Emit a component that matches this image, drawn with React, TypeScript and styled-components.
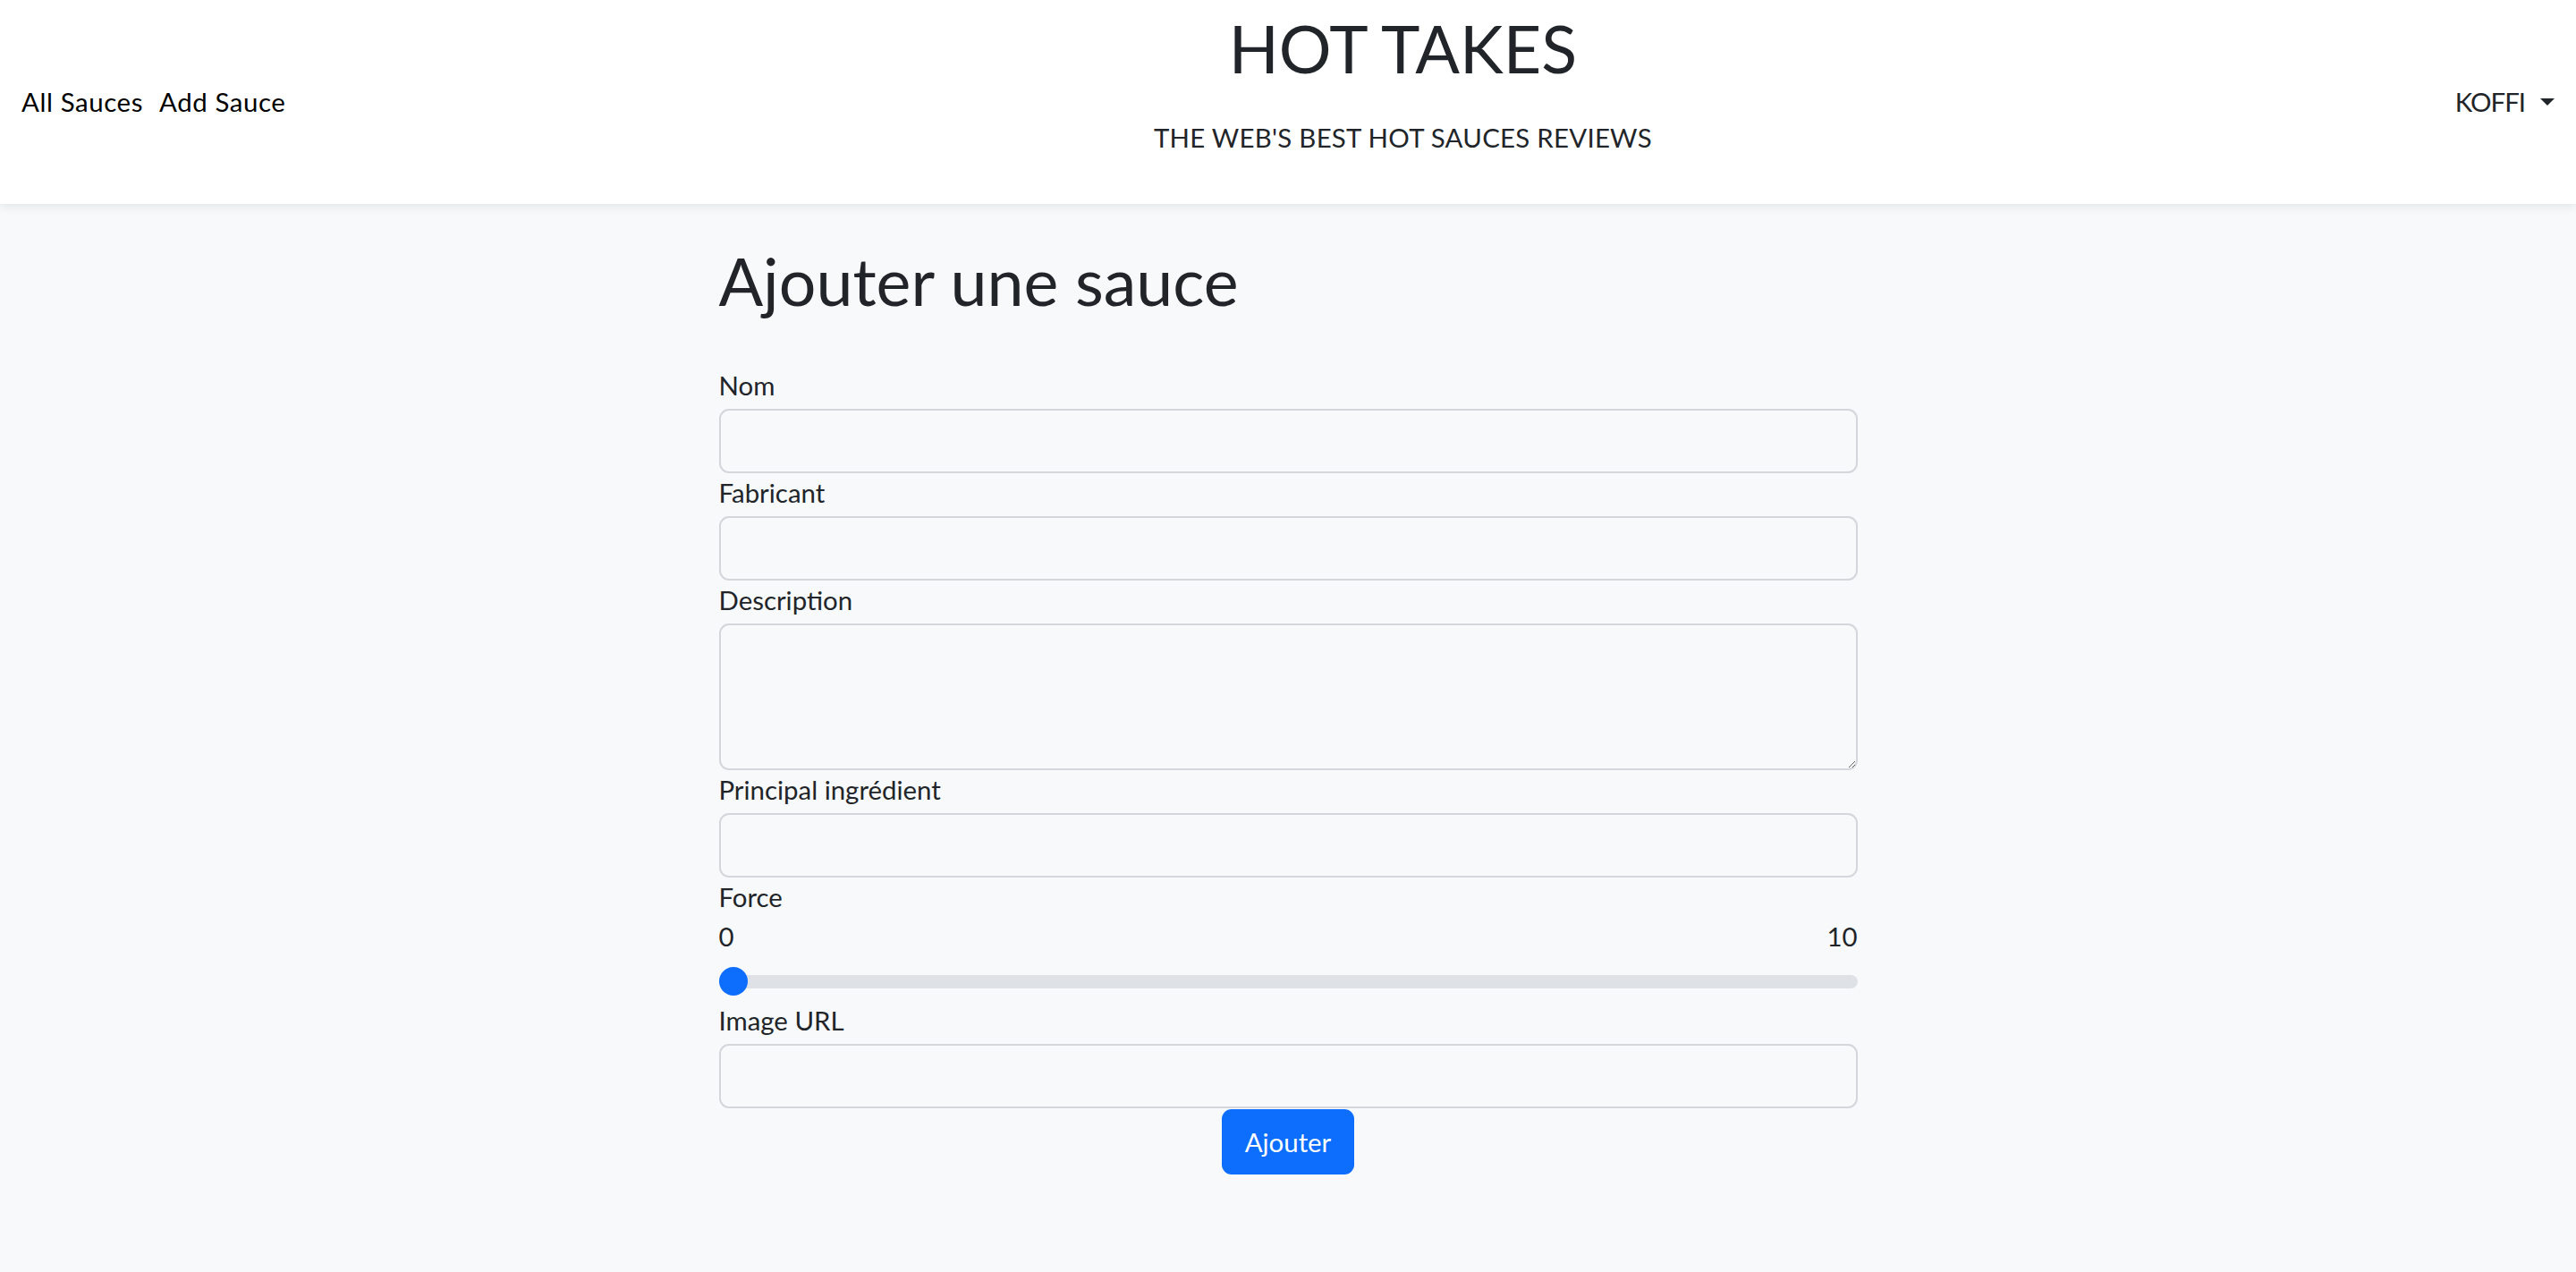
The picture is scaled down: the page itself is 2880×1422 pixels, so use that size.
import React from "react";
import styled, { createGlobalStyle } from "styled-components";

const GlobalStyle = createGlobalStyle`
  html, body {
    margin: 0;
    padding: 0;
    background: #f8f9fa;
    color: #212529;
    font-family: Lato, "Noto Sans", sans-serif;
  }
  * { box-sizing: border-box; }
`;

const Header = styled.header`
  height: 228px;
  background: #ffffff;
  box-shadow: 0 4px 9px rgba(0, 0, 0, 0.075);
  display: flex;
  align-items: center;
  padding: 0 24px;
  position: relative;
`;

const Nav = styled.nav`
  display: flex;
  flex-shrink: 0;
  gap: 18px;
  width: 300px;
  white-space: nowrap;
`;

const NavLink = styled.a`
  font-size: 29.4px;
  line-height: 44px;
  letter-spacing: 0.6px;
  color: #000;
  text-decoration: none;
`;

const Brand = styled.div`
  flex: 1;
  align-self: flex-start;
  padding-top: 10px;
  padding-left: 68px;
  text-align: center;
`;

const BrandTitle = styled.h1`
  margin: 0;
  font-size: 73.5px;
  line-height: 88px;
  font-weight: 400;
  color: #212529;
`;

const BrandTagline = styled.p`
  margin: 34px 0 0;
  font-size: 29.4px;
  line-height: 44px;
  letter-spacing: 0.27px;
  color: #212529;
`;

const UserMenu = styled.button`
  display: flex;
  flex-shrink: 0;
  align-items: center;
  gap: 17px;
  background: none;
  border: none;
  padding: 0;
  font-family: inherit;
  font-size: 29.4px;
  line-height: 44px;
  letter-spacing: -1px;
  white-space: nowrap;
  color: #212529;
`;

const Caret = styled.span`
  width: 0;
  height: 0;
  border-left: 8.5px solid transparent;
  border-right: 8.5px solid transparent;
  border-top: 8.5px solid #212529;
`;

const Main = styled.main`
  width: 1273px;
  margin: 0 auto;
  padding-top: 41.5px;
  padding-bottom: 100px;
`;

const PageTitle = styled.h1`
  margin: 0 0 51.5px;
  font-size: 73.5px;
  line-height: 88px;
  font-weight: 400;
`;

const Form = styled.form`
  display: flex;
  flex-direction: column;
`;

const Label = styled.label<{ $gap?: number }>`
  display: block;
  font-size: 29.4px;
  line-height: 44px;
  margin-bottom: ${(p) => (p.$gap ?? 4)}px;
`;

const fieldStyles = `
  display: block;
  width: 100%;
  background: #f8f9fb;
  border: 2px solid #d3d6db;
  border-radius: 11px;
  font-family: inherit;
  font-size: 29.4px;
  padding: 12px 22px;
  color: #212529;
  outline: none;
`;

const Input = styled.input`
  ${fieldStyles}
  height: 72px;
`;

const TextArea = styled.textarea`
  ${fieldStyles}
  height: 164px;
  resize: vertical;
`;

const RangeScale = styled.div`
  display: flex;
  justify-content: space-between;
  font-size: 29.4px;
  line-height: 44px;
`;

const Range = styled.input`
  -webkit-appearance: none;
  appearance: none;
  display: block;
  width: 100%;
  height: 32px;
  margin: 12px 0 6px;
  background: transparent;
  padding: 0;

  &::-webkit-slider-runnable-track {
    height: 15px;
    background: #dee2e6;
    border-radius: 8px;
  }
  &::-webkit-slider-thumb {
    -webkit-appearance: none;
    appearance: none;
    width: 32px;
    height: 32px;
    margin-top: -8.5px;
    border-radius: 50%;
    background: #0d6efd;
    border: none;
  }
`;

const SubmitButton = styled.button`
  align-self: center;
  margin-top: 1px;
  height: 73px;
  padding: 0 25.5px;
  background: #0d6efd;
  color: #ffffff;
  border: none;
  border-radius: 11px;
  font-family: inherit;
  font-size: 29.4px;
`;

export default function App() {
  return (
    <>
      <GlobalStyle />
      <Header>
        <Nav>
          <NavLink href="#">All Sauces</NavLink>
          <NavLink href="#">Add Sauce</NavLink>
        </Nav>
        <Brand>
          <BrandTitle>HOT TAKES</BrandTitle>
          <BrandTagline>THE WEB'S BEST HOT SAUCES REVIEWS</BrandTagline>
        </Brand>
        <UserMenu type="button">
          KOFFI
          <Caret />
        </UserMenu>
      </Header>
      <Main>
        <PageTitle>Ajouter une sauce</PageTitle>
        <Form onSubmit={(e) => e.preventDefault()}>
          <Label htmlFor="name">Nom</Label>
          <Input id="name" type="text" />
          <Label htmlFor="manufacturer">Fabricant</Label>
          <Input id="manufacturer" type="text" />
          <Label htmlFor="description">Description</Label>
          <TextArea id="description" />
          <Label htmlFor="pepper">Principal ingrédient</Label>
          <Input id="pepper" type="text" />
          <Label htmlFor="heat" $gap={0}>Force</Label>
          <RangeScale>
            <span>0</span>
            <span>10</span>
          </RangeScale>
          <Range id="heat" type="range" min={0} max={10} defaultValue={0} />
          <Label htmlFor="imageUrl">Image URL</Label>
          <Input id="imageUrl" type="text" />
          <SubmitButton type="submit">Ajouter</SubmitButton>
        </Form>
      </Main>
    </>
  );
}
